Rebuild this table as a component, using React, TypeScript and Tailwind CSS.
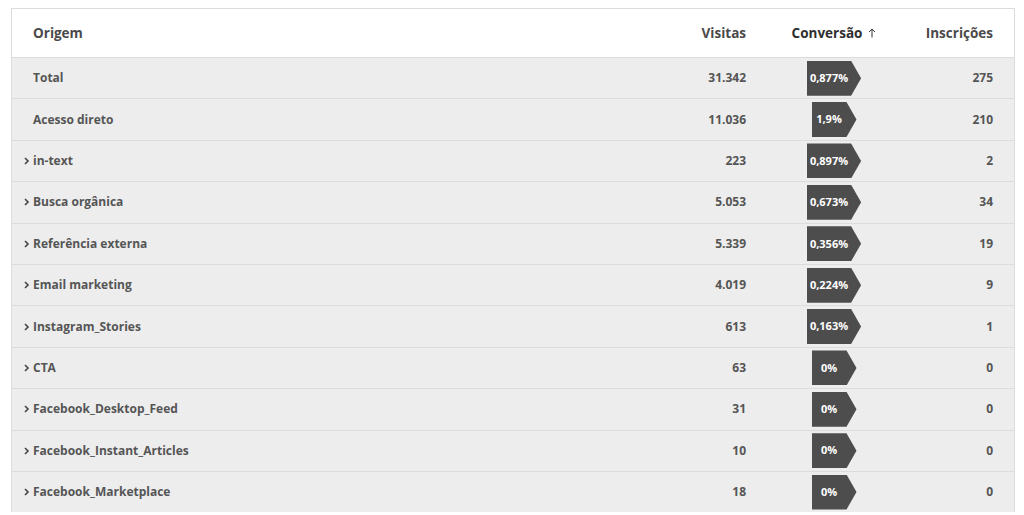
const rows = [
  { name: "Total", visits: "31.342", conv: "0,877%", subs: "275", expandable: false },
  { name: "Acesso direto", visits: "11.036", conv: "1,9%", subs: "210", expandable: false },
  { name: "in-text", visits: "223", conv: "0,897%", subs: "2", expandable: true },
  { name: "Busca orgânica", visits: "5.053", conv: "0,673%", subs: "34", expandable: true },
  { name: "Referência externa", visits: "5.339", conv: "0,356%", subs: "19", expandable: true },
  { name: "Email marketing", visits: "4.019", conv: "0,224%", subs: "9", expandable: true },
  { name: "Instagram_Stories", visits: "613", conv: "0,163%", subs: "1", expandable: true },
  { name: "CTA", visits: "63", conv: "0%", subs: "0", expandable: true },
  { name: "Facebook_Desktop_Feed", visits: "31", conv: "0%", subs: "0", expandable: true },
  { name: "Facebook_Instant_Articles", visits: "10", conv: "0%", subs: "0", expandable: true },
  { name: "Facebook_Marketplace", visits: "18", conv: "0%", subs: "0", expandable: true },
];

function Chevron() {
  return (
    <svg width="10" height="8" viewBox="0 0 10 8" className="shrink-0">
      <path d="M2 1 L5 4 L2 7" fill="none" stroke="#444" strokeWidth="1.6" />
    </svg>
  );
}

function Badge({ value }: { value: string }) {
  return (
    <div className="inline-flex h-[35px] items-center bg-[#4d4d4d] pr-[10px] [clip-path:polygon(0_0,calc(100%-10px)_0,100%_50%,calc(100%-10px)_100%,0_100%)]">
      <span className="min-w-[35px] px-[3px] text-center text-[11px] font-bold text-white">{value}</span>
    </div>
  );
}

export default function App() {
  return (
    <div className="min-h-[515px] bg-white pl-[11px] pt-[8px] font-['Open_Sans',sans-serif] font-bold text-[#555]">
      <div className="w-[1004px] border border-b-0 border-[#dcdcdc]">
        {/* Header */}
        <div className="grid h-[48px] grid-cols-[1fr_120px_134px_113px] items-center bg-white text-[13.5px] text-[#4a4a4a]">
          <div className="pl-[21px]">Origem</div>
          <div className="pr-[21px] text-right">Visitas</div>
          <div className="flex items-center justify-center gap-[6px] text-[#2e2e2e]">
            Conversão
            <svg width="8" height="10" viewBox="0 0 8 10">
              <path d="M4 9.5 V1 M1 4 L4 1 L7 4" fill="none" stroke="#333" strokeWidth="1" />
            </svg>
          </div>
          <div className="pr-[21px] text-right">Inscrições</div>
        </div>

        {/* Body */}
        {rows.map((row) => (
          <div
            key={row.name}
            className="grid h-[41.4px] grid-cols-[1fr_120px_134px_113px] items-center border-t border-[#dcdcdc] bg-[#ededed] text-[12px]"
          >
            <div className="flex items-center pl-[11px]">
              {row.expandable ? <Chevron /> : <span className="w-[10px]" />}
              <span>{row.name}</span>
            </div>
            <div className="pr-[21px] text-right">{row.visits}</div>
            <div className="flex justify-center">
              <Badge value={row.conv} />
            </div>
            <div className="pr-[21px] text-right">{row.subs}</div>
          </div>
        ))}
      </div>
    </div>
  );
}
